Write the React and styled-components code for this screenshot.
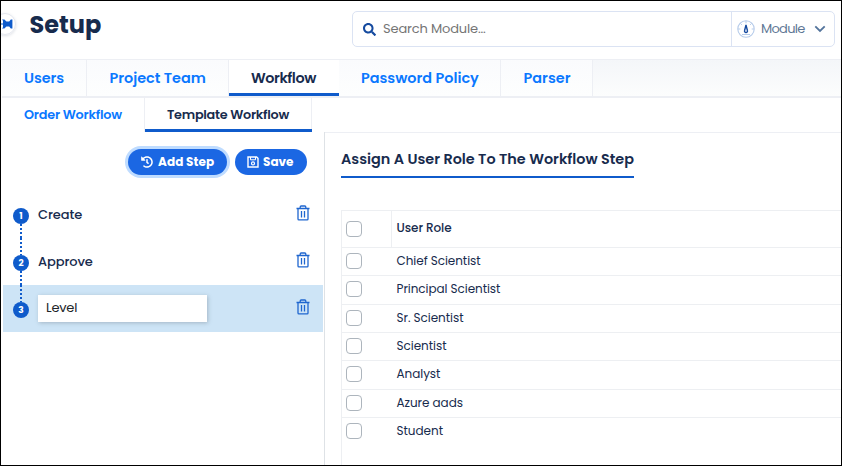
import React from "react";
import styled, { createGlobalStyle, css } from "styled-components";
import { FaSearch, FaHistory } from "react-icons/fa";

const GlobalStyle = createGlobalStyle`
  *, *::before, *::after { box-sizing: border-box; }
  body {
    margin: 0;
    background: #fff;
    font-family: Poppins, Inter, "Open Sans", sans-serif;
    color: #172b4d;
  }
`;

const Frame = styled.div`
  width: 842px;
  height: 466px;
  border: 1px solid #000;
  background: #fff;
  overflow: hidden;
  display: flex;
  flex-direction: column;
`;

const Text = styled.span`
  white-space: nowrap;
  letter-spacing: ${(p) => p.$track || 0}px;
`;

const Header = styled.header`
  height: 58px;
  flex: none;
  display: flex;
  align-items: flex-start;
  padding-right: 6px;
`;

const PinButton = styled.div`
  width: 22px;
  height: 22px;
  margin: 12px 0 0 -7px;
  flex: none;
  border: 1px solid #e3e6ee;
  border-radius: 50%;
  box-shadow: 0 1px 3px rgba(30, 50, 90, 0.15);
  display: flex;
  align-items: center;
  justify-content: flex-end;
  padding-right: 2px;
`;

const Title = styled.h1`
  margin: 6px 0 0 13.5px;
  width: 322.5px;
  font-size: 24px;
  line-height: 36px;
  font-weight: 700;
`;

const SearchBar = styled.div`
  width: 483px;
  height: 36px;
  margin-top: 10px;
  flex: none;
  border: 1px solid #dbe3f3;
  border-radius: 5px;
  display: flex;
`;

const SearchField = styled.div`
  flex: 1;
  display: flex;
  align-items: center;
  gap: 7px;
  padding-left: 10px;
  font-size: 13px;
  color: #757575;
  svg { color: #154a9f; }
`;

const ModulePicker = styled.div`
  width: 103px;
  border-left: 1px solid #dbe3f3;
  display: flex;
  align-items: center;
  padding-left: 5px;
  font-size: 13px;
  color: #5f7896;
`;

const ModuleName = styled(Text)`
  width: 53px;
  margin-left: 6px;
`;

const TabBar = styled.nav`
  height: 39px;
  flex: none;
  margin-left: 1px;
  display: flex;
  border-top: 1px solid #edeff4;
  border-bottom: 2px solid #edeff4;
  background: linear-gradient(#f4f6f9, #fcfdfd);
`;

const Tab = styled.div`
  width: ${(p) => p.$width}px;
  padding-left: ${(p) => p.$inset || 22}px;
  border-right: 1px solid #edeff4;
  background: linear-gradient(#fafbfd, #fdfefe);
  font-size: 14.4px;
  font-weight: 600;
  line-height: 36px;
  color: #0a78ff;
  ${(p) =>
    p.$active &&
    css`
      background: #fff;
      border-right: 0;
      color: #172b4d;
      box-shadow: inset 0 -3px #0f5bcb;
    `}
`;

const SubTabBar = styled.nav`
  height: 34px;
  flex: none;
  margin-left: 1px;
  display: flex;
`;

const SubTab = styled.div`
  width: ${(p) => p.$width}px;
  padding-left: 22px;
  border-right: 1px solid #edeff4;
  font-size: 12.8px;
  font-weight: 600;
  line-height: 34px;
  color: #0a78ff;
  ${(p) =>
    p.$active &&
    css`
      border-right: 0;
      color: #172b4d;
      box-shadow: inset 0 -3px #0f5bcb, inset -1px 0 #edeff4;
    `}
`;

const Content = styled.main`
  flex: 1;
  display: flex;
  min-height: 0;
`;

const StepsPanel = styled.section`
  width: 324px;
  flex: none;
  padding: 17px 1px 0 2px;
  border-right: 1px solid #dee2e6;
`;

const RolesPanel = styled.section`
  flex: 1;
  display: flex;
  flex-direction: column;
  align-items: flex-start;
  padding-left: 16px;
  border-top: 1px solid #edeff4;
`;

const Actions = styled.div`
  display: flex;
  justify-content: flex-end;
  gap: 8px;
  padding-right: 16px;
  margin-bottom: 16px;
`;

const PillButton = styled.button`
  width: ${(p) => p.$width}px;
  height: 26px;
  padding: 0 0 0 ${(p) => p.$inset}px;
  border: 0;
  border-radius: 13px;
  background: #1b67e3;
  color: #fff;
  font: inherit;
  font-size: 12px;
  font-weight: 700;
  display: flex;
  align-items: center;
  gap: ${(p) => p.$gap}px;
  box-shadow: ${(p) => (p.$focused ? "0 0 0 3px #bfdcff" : "none")};
`;

const StepRow = styled.div`
  height: 47px;
  display: flex;
  align-items: center;
  padding: 0 13px 0 10px;
  font-size: 13px;
  font-weight: 500;
  background: ${(p) => (p.$selected ? "#cde4f6" : "transparent")};
`;

const Rail = styled.div`
  width: 16px;
  height: 47px;
  display: flex;
  flex-direction: column;
  align-items: center;
`;

const Connector = styled.div`
  width: 2px;
  height: ${(p) => p.$height}px;
  background: ${(p) =>
    p.$hidden ? "none" : "repeating-linear-gradient(#0f5bcb 0 2px, transparent 2px 4px)"};
`;

const StepNumber = styled.div`
  width: 16px;
  height: 16px;
  flex: none;
  border-radius: 50%;
  background: #0f5bcb;
  color: #fff;
  font-size: 9px;
  font-weight: 700;
  line-height: 17px;
  text-align: center;
`;

const StepName = styled.div`
  flex: 1;
  padding: 1px 0 0 9px;
`;

const StepInput = styled.div`
  width: 169px;
  height: 27px;
  margin-left: 9px;
  margin-right: auto;
  padding-left: 8px;
  background: #fff;
  box-shadow: 1px 1px 4px rgba(90, 100, 110, 0.35);
  font-weight: 400;
  line-height: 26px;
  color: #212529;
`;

const PanelTitle = styled.h2`
  margin: 12px 0 32px;
  width: 293px;
  height: 33px;
  border-bottom: 2px solid #0f5bcb;
  font-size: 14.4px;
  font-weight: 600;
  line-height: 28px;
`;

const Table = styled.div`
  align-self: stretch;
  flex: 1;
  border-top: 1px solid #edeff2;
  border-left: 1px solid #edeff2;
`;

const TableRow = styled.div`
  height: ${(p) => (p.$head ? 37 : 28.33)}px;
  display: flex;
  align-items: center;
  border-bottom: 1px solid ${(p) => (p.$last ? "transparent" : "#edeff2")};
  font-size: 12px;
  font-weight: ${(p) => (p.$head ? 500 : 400)};
`;

const CheckCell = styled.div`
  width: 50px;
  align-self: stretch;
  display: flex;
  align-items: center;
  padding: 0 0 ${(p) => (p.$head ? 0 : 1)}px 4px;
  border-right: 1px solid ${(p) => (p.$head ? "#edeff2" : "transparent")};
`;

const Checkbox = styled.div`
  width: 16px;
  height: 16px;
  border: 1px solid #adb5bd;
  border-radius: 4px;
  background: #fff;
`;

const RoleCell = styled.div`
  padding: 0 0 ${(p) => (p.$head ? 2 : 1)}px 4.5px;
`;

const PinIcon = () => (
  <svg width="14" height="12" viewBox="0 0 14 12" fill="#0f5bcb">
    <path d="M0 5.4h4V2.8L3 1.5h2.4L7.4 3.6h2.8L11.8 1.6H13.4v8.8h-1.6L10.2 8.4H7.4L5.4 10.5H3L4 9.2V6.6H0z" />
  </svg>
);

const GaugeIcon = () => (
  <svg width="18" height="18" viewBox="0 0 18 18" fill="none">
    <circle cx="9" cy="9" r="8.2" stroke="#b5cbea" strokeWidth="1.1" />
    <path d="M9 1v2.3M1 9h2.3M14.7 9H17M3.4 3.4l1.5 1.5M14.6 3.4l-1.5 1.5M5 14.5h8" stroke="#b5cbea" />
    <path d="M9 5 7.6 10.5a1.5 1.5 0 1 0 2.8 0z" stroke="#154a9f" strokeWidth="1.4" />
  </svg>
);

const ChevronIcon = () => (
  <svg width="12" height="8" viewBox="0 0 12 8" fill="none">
    <path d="m1.3 1.3 4.7 4.7 4.7-4.7" stroke="#53749c" strokeWidth="1.8" />
  </svg>
);

const SaveIcon = () => (
  <svg width="12" height="12" viewBox="0 0 12 12" fill="none" stroke="#fff">
    <path d="M1 1h8.6L11 2.4V11H1z" strokeWidth="1.4" />
    <path d="M3.5 1v2.8h5V1" />
    <circle cx="6" cy="7.4" r="1.5" strokeWidth="1.2" />
  </svg>
);

const TrashSvg = styled.svg`
  margin-bottom: 3px;
`;

const TrashIcon = () => (
  <TrashSvg width="14" height="16" viewBox="0 0 14 16" fill="none" stroke="#1f66cf" strokeWidth="1.3">
    <path d="M.5 3.5h13M4.2 3.3V2q0-1 1-1h3.6q1 0 1 1v1.3M2 3.6V14q0 .9.9.9h8.2q.9 0 .9-.9V3.6" />
    <path d="M5.5 6v6.5M8.5 6v6.5" />
  </TrashSvg>
);

const tabs = [
  { label: "Users", width: 85, track: -0.05 },
  { label: "Project Team", width: 142, inset: 22.5, track: 0 },
  { label: "Workflow", width: 110, track: -0.45, active: true },
  { label: "Password Policy", width: 162, track: 0 },
  { label: "Parser", width: 92, inset: 22.5, track: 0.05 },
];

const steps = [
  { name: "Create", track: -0.1 },
  { name: "Approve", track: -0.1 },
  { name: "Level", track: -0.2, editing: true },
];

const roles = [
  { name: "Chief Scientist", track: -0.05 },
  { name: "Principal Scientist", track: -0.06 },
  { name: "Sr. Scientist", track: -0.05 },
  { name: "Scientist", track: -0.03 },
  { name: "Analyst", track: -0.05 },
  { name: "Azure aads", track: -0.05 },
  { name: "Student", track: -0.03 },
];

export default function App() {
  return (
    <Frame>
      <GlobalStyle />
      <Header>
        <PinButton><PinIcon /></PinButton>
        <Title><Text>Setup</Text></Title>
        <SearchBar>
          <SearchField>
            <FaSearch size={13} />
            <Text $track={-0.15}>Search Module...</Text>
          </SearchField>
          <ModulePicker>
            <GaugeIcon />
            <ModuleName $track={-0.7}>Module</ModuleName>
            <ChevronIcon />
          </ModulePicker>
        </SearchBar>
      </Header>
      <TabBar>
        {tabs.map((t) => (
          <Tab key={t.label} $width={t.width} $inset={t.inset} $active={t.active}>
            <Text $track={t.track}>{t.label}</Text>
          </Tab>
        ))}
      </TabBar>
      <SubTabBar>
        <SubTab $width={143}><Text $track={-0.22}>Order Workflow</Text></SubTab>
        <SubTab $width={167} $active><Text $track={-0.26}>Template Workflow</Text></SubTab>
      </SubTabBar>
      <Content>
        <StepsPanel>
          <Actions>
            <PillButton $width={99} $inset={13} $gap={5} $focused>
              <FaHistory size={12} />
              <Text $track={0.08}>Add Step</Text>
            </PillButton>
            <PillButton $width={72} $inset={12} $gap={4}>
              <SaveIcon />
              <Text>Save</Text>
            </PillButton>
          </Actions>
          {steps.map((s, i) => (
            <StepRow key={s.name} $selected={s.editing}>
              <Rail>
                <Connector $height={17} $hidden={i === 0} />
                <StepNumber>{i + 1}</StepNumber>
                <Connector $height={14} $hidden={i === steps.length - 1} />
              </Rail>
              {s.editing ? (
                <StepInput><Text $track={s.track}>{s.name}</Text></StepInput>
              ) : (
                <StepName><Text $track={s.track}>{s.name}</Text></StepName>
              )}
              <TrashIcon />
            </StepRow>
          ))}
        </StepsPanel>
        <RolesPanel>
          <PanelTitle><Text>Assign A User Role To The Workflow Step</Text></PanelTitle>
          <Table>
            <TableRow $head>
              <CheckCell $head><Checkbox /></CheckCell>
              <RoleCell $head><Text $track={-0.07}>User Role</Text></RoleCell>
            </TableRow>
            {roles.map((r, i) => (
              <TableRow key={r.name} $last={i === roles.length - 1}>
                <CheckCell><Checkbox /></CheckCell>
                <RoleCell><Text $track={r.track}>{r.name}</Text></RoleCell>
              </TableRow>
            ))}
          </Table>
        </RolesPanel>
      </Content>
    </Frame>
  );
}
